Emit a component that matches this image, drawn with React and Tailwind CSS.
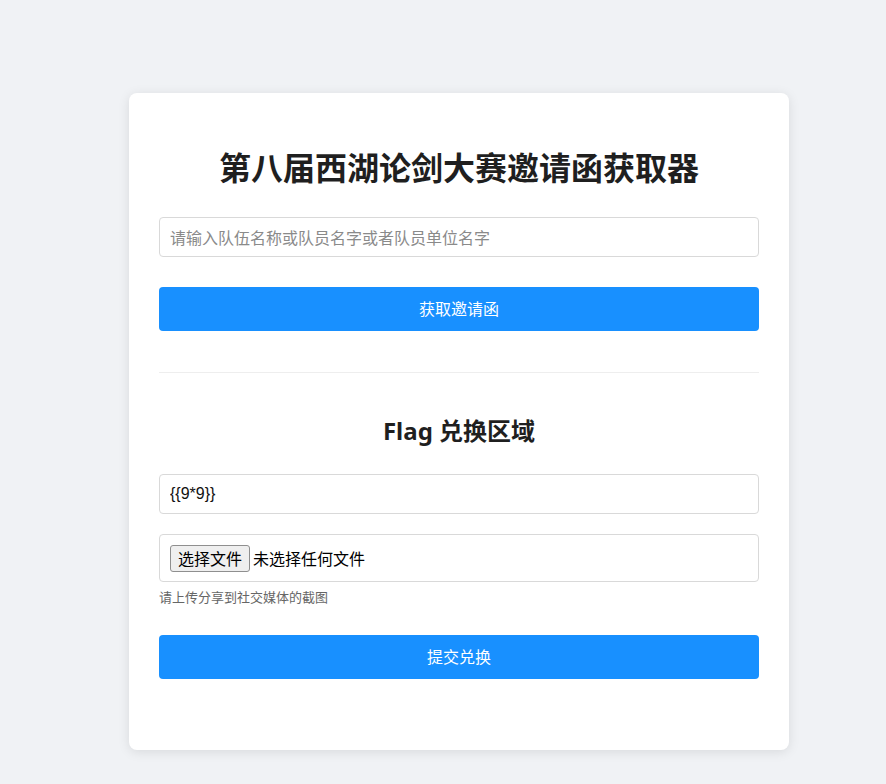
export default function App() {
  const font = { fontFamily: '"Noto Sans", "Noto Sans CJK SC", sans-serif' };

  return (
    <div
      className="min-h-[784px] bg-[#f0f2f5] pt-[93px] pl-[129px]"
      style={font}
    >
      <div className="w-[660px] rounded-lg bg-white px-[30px] pt-[56px] pb-[71px] shadow-[0_2px_12px_rgba(0,0,0,0.1)]">
        {/* invitation */}
        <h1 className="text-center text-[32px] font-bold leading-[38px] text-[#1f1f1f]">
          第八届西湖论剑大赛邀请函获取器
        </h1>

        <input
          type="text"
          placeholder="请输入队伍名称或队员名字或者队员单位名字"
          className="mt-[30px] block h-[40px] w-full rounded border border-[#d9d9d9] px-[10px] text-base text-[#222] outline-none placeholder:text-[#8a8a8a]"
          style={{ fontFamily: '"Noto Sans CJK SC", sans-serif' }}
        />

        <button className="mt-[30px] block h-[44px] w-full rounded bg-[#1890ff] text-base text-white">
          获取邀请函
        </button>

        <div className="mt-[41px] h-px bg-[#eeeeee]" />

        {/* flag */}
        <h2 className="mt-[43px] text-center text-2xl font-bold leading-[29px] text-[#1f1f1f]">
          Flag 兑换区域
        </h2>

        <input
          type="text"
          defaultValue="{{9*9}}"
          className="mt-[29px] block h-[40px] w-full rounded border border-[#d9d9d9] px-[10px] text-base text-[#111] outline-none"
          style={{ fontFamily: '"Liberation Sans", "Noto Sans CJK SC", sans-serif' }}
        />

        <label
          className="mt-[20px] flex h-[48px] w-full cursor-pointer items-center rounded border border-[#d9d9d9] px-[10px] text-base text-black"
          style={{ fontFamily: '"Noto Sans CJK SC", sans-serif' }}
        >
          <span className="flex h-[27px] items-center rounded-[3px] border border-[#8f8f8f] bg-[#efefef] px-[7px] leading-none">
            选择文件
          </span>
          <span className="ml-[3px]">未选择任何文件</span>
          <input type="file" className="hidden" />
        </label>
        <p
          className="mt-[6px] text-[13px] leading-[18px] text-[#666]"
          style={{ fontFamily: '"Noto Sans CJK SC", sans-serif' }}
        >
          请上传分享到社交媒体的截图
        </p>

        <button className="mt-[29px] block h-[44px] w-full rounded bg-[#1890ff] text-base text-white">
          提交兑换
        </button>
      </div>
    </div>
  );
}
